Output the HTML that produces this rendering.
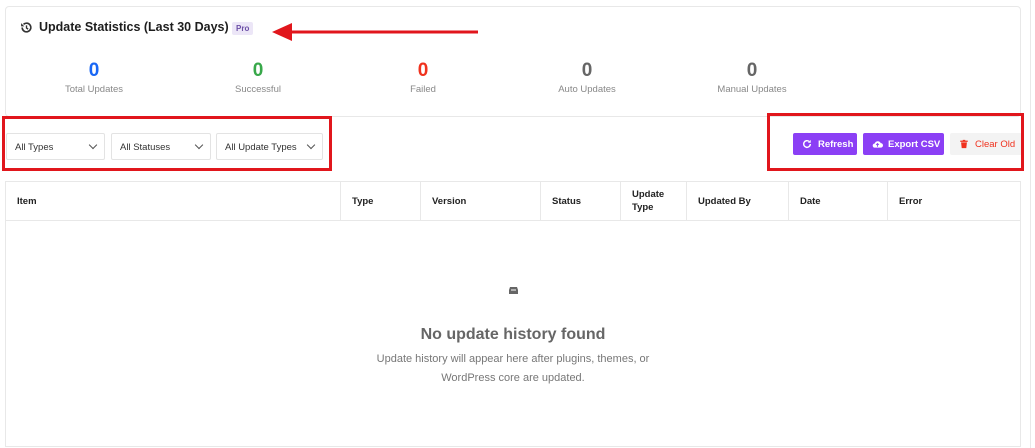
<!DOCTYPE html>
<html><head><style>
*{box-sizing:border-box;margin:0;padding:0}
body{width:1035px;height:448px;background:#fff;font-family:"Liberation Sans",sans-serif;position:relative;overflow:hidden;color:#1e1e1e}
.abs{position:absolute}
.card{left:5px;top:6px;width:1016px;height:111px;border:1px solid #e8e8e8;border-radius:4px}
.vline{left:1030px;top:0;width:1px;height:448px;background:#e8e8e8}
.title{left:20px;top:20px;font-size:12.5px;font-weight:bold;color:#1e1e1e;display:flex;align-items:center;white-space:nowrap}
.pro{left:232px;top:22px;background:#ece6f7;color:#6b4fa6;font-size:8px;font-weight:bold;padding:2px 4px;border-radius:2px}
.stat{width:140px;text-align:center}
.stat b{display:block;font-size:19px;font-weight:bold;line-height:20px}
.stat span{display:block;font-size:9.5px;color:#888;margin-top:3px}
.sel{top:133px;height:27px;border:1px solid #e3e3e3;border-radius:2px;font-size:9.5px;color:#333;padding:8px 0 0 8px}
.sel i{position:absolute;right:8px;top:8px;width:6px;height:6px;border-right:1.3px solid #555;border-bottom:1.3px solid #555;transform:rotate(45deg)}
.btn{top:133px;height:22px;border-radius:2px;font-size:9.5px;font-weight:bold;display:flex;align-items:center;padding-left:9px;color:#fff;background:#8b3ff5;white-space:nowrap}
.red{border:3px solid #e1161c}
table{position:absolute;left:5px;top:181px;width:1016px;height:266px;border-collapse:collapse;border:1px solid #e8e8e8}
th{height:39px;border:1px solid #e8e8e8;font-size:9.5px;text-align:left;padding-left:11px;font-weight:bold;color:#222;line-height:13px}
td{border:1px solid #e8e8e8}
</style></head><body>
<div class="abs vline"></div>
<div class="abs card"></div>
<div class="abs title"><svg width="13" height="13" viewBox="0 0 24 24" style="margin-right:6px"><path d="M4 12a8 8 0 1 0 2.5-5.8" fill="none" stroke="#333" stroke-width="3"/><path d="M2 4v6h6z" fill="#333"/><path d="M12 8v5l3 2" fill="none" stroke="#333" stroke-width="2.5"/></svg>Update Statistics (Last 30 Days)</div>
<div class="abs pro">Pro</div>
<svg class="abs" style="left:270px;top:22px" width="210" height="20"><line x1="20" y1="10" x2="208" y2="10" stroke="#e1161c" stroke-width="3"/><polygon points="2,10 22,1 22,19" fill="#e1161c"/></svg>
<div class="abs stat" style="left:24px;top:61px"><b style="color:#1967f5">0</b><span>Total Updates</span></div>
<div class="abs stat" style="left:188px;top:61px"><b style="color:#38a84a">0</b><span>Successful</span></div>
<div class="abs stat" style="left:353px;top:61px"><b style="color:#f0321e">0</b><span>Failed</span></div>
<div class="abs stat" style="left:517px;top:61px"><b style="color:#666">0</b><span>Auto Updates</span></div>
<div class="abs stat" style="left:682px;top:61px"><b style="color:#666">0</b><span>Manual Updates</span></div>
<div class="abs sel" style="left:6px;width:99px">All Types<i></i></div>
<div class="abs sel" style="left:111px;width:100px">All Statuses<i></i></div>
<div class="abs sel" style="left:216px;width:107px">All Update Types<i></i></div>
<div class="abs red" style="left:2px;top:116px;width:330px;height:55px"></div>
<div class="abs btn" style="left:793px;width:64px"><svg width="10" height="10" viewBox="0 0 24 24" style="margin-right:6px"><path d="M20 12a8 8 0 1 1-3-6.2" fill="none" stroke="#fff" stroke-width="3.5"/><path d="M21 2v7h-7z" fill="#fff"/></svg>Refresh</div>
<div class="abs btn" style="left:863px;width:81px"><svg width="11" height="10" viewBox="0 0 24 20" style="margin-right:5px"><path d="M6 18h13a5 5 0 0 0 0-10 7 7 0 0 0-13 1 4.5 4.5 0 0 0 0 9z" fill="#fff"/><path d="M12 9v7M9 12l3-3 3 3" stroke="#8b3ff5" stroke-width="2" fill="none"/></svg>Export CSV</div>
<div class="abs btn" style="left:950px;width:72px;background:#f3f3f3;color:#f0321e;font-weight:normal"><svg width="10" height="10" viewBox="0 0 24 24" style="margin-right:6px"><path d="M3 4h18v3H3zM9 2h6v2H9zM5 8h14l-1.5 14h-11z" fill="#f0321e"/></svg>Clear Old</div>
<div class="abs red" style="left:767px;top:113px;width:257px;height:58px"></div>
<table><tr><th style="width:335px">Item</th><th style="width:80px">Type</th><th style="width:120px">Version</th><th style="width:80px">Status</th><th style="width:66px">Update<br>Type</th><th style="width:102px">Updated By</th><th style="width:99px">Date</th><th>Error</th></tr><tr><td colspan="8"></td></tr></table>
<svg class="abs" style="left:509px;top:286px" width="9" height="8" viewBox="0 0 9 8"><path d="M1 1h7l1 3v4H0V4z" fill="#666"/><path d="M2 4h5" stroke="#fff" stroke-width="1"/></svg>
<div class="abs" style="left:0;width:1026px;top:326px;text-align:center;font-size:16px;font-weight:bold;color:#666">No update history found</div>
<div class="abs" style="left:0;width:1026px;top:350px;text-align:center;font-size:11px;color:#777;line-height:19px">Update history will appear here after plugins, themes, or<br>WordPress core are updated.</div>
</body></html>
